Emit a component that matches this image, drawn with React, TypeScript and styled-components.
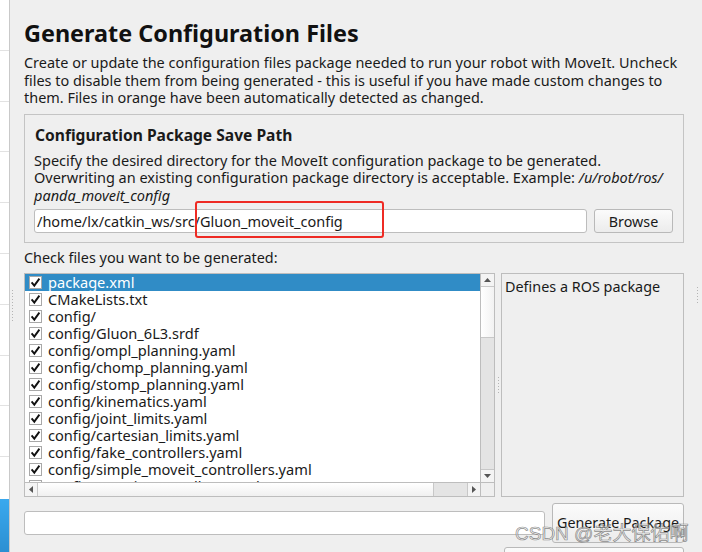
import React from "react";
import styled, { createGlobalStyle } from "styled-components";

const Global = createGlobalStyle`
  html, body { margin: 0; padding: 0; background: #efefef; overflow: hidden; }
  body { font-family: "Noto Sans", "Open Sans", sans-serif; color: #1a1a1a; }
  * { box-sizing: border-box; }
`;

const Window = styled.div`
  width: 702px;
  height: 552px;
  display: flex;
  position: relative;
  overflow: hidden;
  background: #efefef;
`;

const Nav = styled.div`
  width: 10px;
  flex: none;
  background: #fff;
  border-right: 1px solid #c9c9c9;
  display: flex;
  flex-direction: column;
`;

const NavItem = styled.div<{ $active?: boolean }>`
  height: ${(p) => (p.$active ? "60px" : "50.8px")};
  flex: none;
  border-bottom: 1px solid ${(p) => (p.$active ? "transparent" : "#e2e2e2")};
  background: ${(p) => (p.$active ? "linear-gradient(#3aa9ee, #2a8ccf)" : "#fff")};
`;

const NavGap = styled.div`
  height: 42px;
  flex: none;
  background: #fff;
`;

const Splitter = styled.div<{ $w: number; $top: number; $left?: number }>`
  width: ${(p) => p.$w}px;
  flex: none;
  display: flex;
  justify-content: ${(p) => (p.$left !== undefined ? "flex-start" : "center")};
  padding-left: ${(p) => p.$left ?? 0}px;
  padding-top: ${(p) => p.$top}px;
`;

const Dots = styled.div<{ $h: number }>`
  width: 1px;
  height: ${(p) => p.$h}px;
  background: repeating-linear-gradient(#b4b4b4 0 1px, transparent 1px 3px);
`;

const Main = styled.div`
  width: 660px;
  flex: none;
  display: flex;
  flex-direction: column;
  padding-top: 19px;
`;

const Title = styled.h1`
  margin: 0;
  font-size: 23.4px;
  line-height: 28px;
  font-weight: 700;
  color: #111;
`;

const Para = styled.p`
  margin: 7px 0 0;
  font-size: 14.45px;
  line-height: 17.5px;
  white-space: nowrap;
`;

const Group = styled.div`
  margin-top: 7px;
  border: 1px solid #c4c4c4;
  padding: 10px 9px 9px;
  display: flex;
  flex-direction: column;
`;

const GroupTitle = styled.div`
  font-size: 15.6px;
  line-height: 20px;
  font-weight: 700;
  padding-left: 1px;
`;

const GroupText = styled.p`
  margin: 7px 0 0;
  font-size: 14.5px;
  line-height: 17.5px;
  white-space: nowrap;
  em { font-style: italic; }
`;

const PathRow = styled.div`
  margin-top: 5px;
  display: flex;
  gap: 7px;
  position: relative;
`;

const TextInput = styled.div<{ $w: number; $h: number }>`
  width: ${(p) => p.$w}px;
  height: ${(p) => p.$h}px;
  background: #fff;
  border: 1px solid #bdbdbd;
  border-radius: 3px;
  font-size: 14.5px;
  line-height: 22px;
  padding-left: 2px;
  white-space: nowrap;
  overflow: hidden;
`;

const Button = styled.div<{ $w: number; $h: number }>`
  width: ${(p) => p.$w}px;
  height: ${(p) => p.$h}px;
  border: 1px solid #b9b9b9;
  border-radius: 3px;
  background: linear-gradient(#fbfbfb, #ececec);
  font-size: 14.3px;
  display: flex;
  align-items: center;
  justify-content: center;
  flex: none;
`;

const Highlight = styled.div`
  position: absolute;
  left: 161px;
  top: -8px;
  width: 189px;
  height: 37px;
  border: 2px solid #ee2b24;
  border-radius: 3px;
  pointer-events: none;
`;

const Label = styled.div`
  margin-top: 6px;
  font-size: 14.4px;
  line-height: 17.5px;
`;

const ListArea = styled.div`
  margin-top: 6px;
  height: 224px;
  display: flex;
`;

const ListBox = styled.div`
  width: 471px;
  flex: none;
  border: 1px solid #bdbdbd;
  background: #fff;
  display: grid;
  grid-template-columns: 1fr 14px;
  grid-template-rows: 1fr 14px;
  min-height: 0;
`;

const Items = styled.div`
  overflow: hidden;
  min-height: 0;
`;

const Row = styled.div<{ $sel?: boolean }>`
  height: 17px;
  display: flex;
  align-items: center;
  gap: 6px;
  padding-left: 4px;
  font-size: 14.6px;
  line-height: 17px;
  white-space: nowrap;
  background: ${(p) => (p.$sel ? "#308cc6" : "transparent")};
  color: ${(p) => (p.$sel ? "#fff" : "#1a1a1a")};
`;

const Box = styled.span`
  width: 13px;
  height: 13px;
  flex: none;
  background: #fff;
  border: 1px solid #a8a8a8;
  display: flex;
  align-items: center;
  justify-content: center;
`;

const VScroll = styled.div`
  border-left: 1px solid #bdbdbd;
  display: flex;
  flex-direction: column;
  background: #e4e4e4;
`;

const HScroll = styled.div`
  border-top: 1px solid #bdbdbd;
  display: flex;
  background: #e4e4e4;
`;

const Corner = styled.div`
  border-top: 1px solid #bdbdbd;
  border-left: 1px solid #bdbdbd;
  background: #efefef;
`;

const Arrow = styled.div<{ $dir: "up" | "down" | "left" | "right" }>`
  flex: none;
  width: ${(p) => (p.$dir === "up" || p.$dir === "down" ? "100%" : "13px")};
  height: ${(p) => (p.$dir === "up" || p.$dir === "down" ? "13px" : "100%")};
  background: #f4f4f4;
  display: flex;
  align-items: center;
  justify-content: center;
  ${(p) => p.$dir === "up" && "border-bottom: 1px solid #c8c8c8;"}
  ${(p) => p.$dir === "down" && "border-top: 1px solid #c8c8c8;"}
  ${(p) => p.$dir === "left" && "border-right: 1px solid #c8c8c8;"}
  ${(p) => p.$dir === "right" && "border-left: 1px solid #c8c8c8;"}
`;

const Thumb = styled.div<{ $vertical?: boolean; $size: number }>`
  flex: none;
  ${(p) => (p.$vertical ? `height: ${p.$size}px;` : `width: ${p.$size}px;`)}
  background: ${(p) =>
    p.$vertical ? "linear-gradient(90deg, #fff, #f2f2f2)" : "linear-gradient(#fff, #f0f0f0)"};
  ${(p) => (p.$vertical ? "border-bottom: 1px solid #c8c8c8;" : "border-right: 1px solid #c8c8c8;")}
`;

const Track = styled.div`
  flex: 1;
`;

const Desc = styled.div`
  width: 183px;
  flex: none;
  border: 1px solid #bdbdbd;
  padding: 4px 3px;
  font-size: 14.4px;
  line-height: 17.5px;
`;

const BottomRow = styled.div`
  margin-top: 6px;
  display: flex;
  gap: 7px;
  align-items: center;
`;

const LastRow = styled.div`
  margin-top: 4px;
  display: flex;
  justify-content: flex-end;
`;

const Watermark = styled.div`
  position: absolute;
  left: 515px;
  top: 522px;
  font-family: "Liberation Sans", "Noto Sans CJK SC", sans-serif;
  font-size: 19px;
  line-height: 24px;
  color: rgba(240, 240, 240, 0.55);
  -webkit-text-stroke: 0.7px rgba(120, 120, 120, 0.85);
  white-space: nowrap;
  pointer-events: none;
`;

const Tri = ({ dir }: { dir: "up" | "down" | "left" | "right" }) => {
  const pts = {
    up: "0,4 7,4 3.5,0",
    down: "0,0 7,0 3.5,4",
    left: "4,0 4,7 0,3.5",
    right: "0,0 0,7 4,3.5",
  }[dir];
  const vert = dir === "up" || dir === "down";
  return (
    <svg width={vert ? 7 : 4} height={vert ? 4 : 7} viewBox={vert ? "0 0 7 4" : "0 0 4 7"}>
      <polygon points={pts} fill="#555" />
    </svg>
  );
};

const Check = () => (
  <Box>
    <svg width="11" height="11" viewBox="0 0 11 11">
      <path d="M1.6 5.4 L4.3 8.6 L9.4 1.6" fill="none" stroke="#111" strokeWidth="1.9" />
    </svg>
  </Box>
);

const files = [
  "package.xml",
  "CMakeLists.txt",
  "config/",
  "config/Gluon_6L3.srdf",
  "config/ompl_planning.yaml",
  "config/chomp_planning.yaml",
  "config/stomp_planning.yaml",
  "config/kinematics.yaml",
  "config/joint_limits.yaml",
  "config/cartesian_limits.yaml",
  "config/fake_controllers.yaml",
  "config/simple_moveit_controllers.yaml",
  "config/moveit_controllers.yaml",
];

export default function App() {
  return (
    <Window>
      <Global />
      <Nav>
        {Array.from({ length: 9 }).map((_, i) => (
          <NavItem key={i} />
        ))}
        <NavGap />
        <NavItem $active />
      </Nav>
      <Splitter $w={14} $top={290} $left={2}>
        <Dots $h={31} />
      </Splitter>
      <Main>
        <Title>Generate Configuration Files</Title>
        <Para>
          Create or update the configuration files package needed to run your robot with MoveIt. Uncheck
          <br />
          files to disable them from being generated - this is useful if you have made custom changes to
          <br />
          them. Files in orange have been automatically detected as changed.
        </Para>
        <Group>
          <GroupTitle>Configuration Package Save Path</GroupTitle>
          <GroupText>
            Specify the desired directory for the MoveIt configuration package to be generated.
            <br />
            Overwriting an existing configuration package directory is acceptable. Example:{" "}
            <em>/u/robot/ros/</em>
            <br />
            <em>panda_moveit_config</em>
          </GroupText>
          <PathRow>
            <TextInput $w={553} $h={24}>/home/lx/catkin_ws/src/Gluon_moveit_config</TextInput>
            <Button $w={79} $h={24}>Browse</Button>
            <Highlight />
          </PathRow>
        </Group>
        <Label>Check files you want to be generated:</Label>
        <ListArea>
          <ListBox>
            <Items>
              {files.map((f, i) => (
                <Row key={f} $sel={i === 0}>
                  <Check />
                  {f}
                </Row>
              ))}
            </Items>
            <VScroll>
              <Arrow $dir="up">
                <Tri dir="up" />
              </Arrow>
              <Thumb $vertical $size={51} />
              <Track />
              <Arrow $dir="down">
                <Tri dir="down" />
              </Arrow>
            </VScroll>
            <HScroll>
              <Arrow $dir="left">
                <Tri dir="left" />
              </Arrow>
              <Thumb $size={396} />
              <Track />
              <Arrow $dir="right">
                <Tri dir="right" />
              </Arrow>
            </HScroll>
            <Corner />
          </ListBox>
          <Splitter $w={6} $top={104}>
            <Dots $h={16} />
          </Splitter>
          <Desc>Defines a ROS package</Desc>
        </ListArea>
        <BottomRow>
          <TextInput $w={521} $h={24} />
          <Button $w={132} $h={40}>Generate Package</Button>
        </BottomRow>
        <LastRow>
          <Button $w={180} $h={30} />
        </LastRow>
      </Main>
      <Splitter $w={18} $top={287} $left={13}>
        <Dots $h={16} />
      </Splitter>
      <Watermark>CSDN @老大保佑啊</Watermark>
    </Window>
  );
}
